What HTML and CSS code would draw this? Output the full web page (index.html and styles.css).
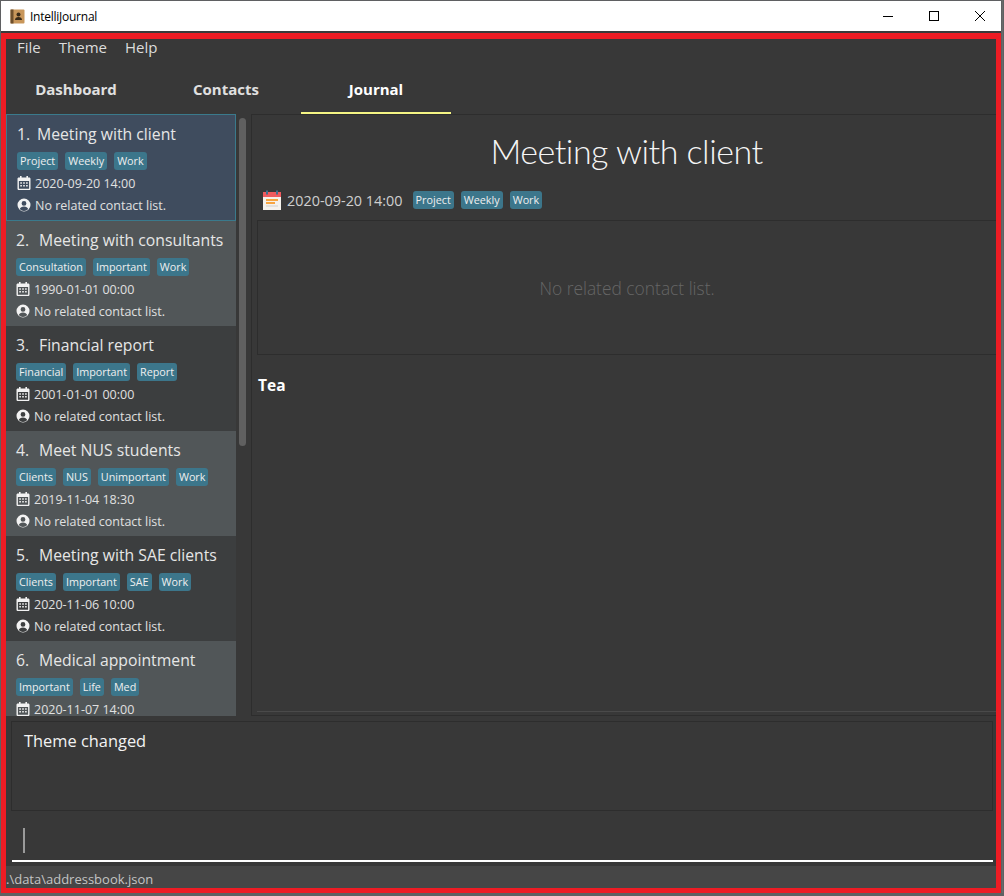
FILE: index.html
```html
<!DOCTYPE html>
<html lang="en">
<head>
  <meta charset="UTF-8" />
  <title>IntelliJournal</title>
  <link rel="stylesheet" href="styles.css">
</head>
<body>

  <svg class="defs" width="0" height="0">
    <symbol id="cal" viewBox="0 0 14 14">
      <path fill="#f2f2f2" d="M3 0h1.600v1.500h4.800V0H11v1.500h1.200c.7 0 1.300.6 1.300 1.300v9.900c0 .7-.6 1.300-1.300 1.300H1.800c-.7 0-1.300-.6-1.300-1.300V2.800c0-.7.6-1.300 1.300-1.300H3zM1.900 5v7.400c0 .2.100.3.300.3h9.600c.2 0 .3-.1.3-.3V5z" fill-rule="evenodd"/>
      <path fill="#f2f2f2" d="M3.300 6.300h1.600v1.500H3.300zM6.200 6.300h1.600v1.500H6.200zM9.100 6.300h1.600v1.500H9.100zM3.300 9h1.600v1.500H3.300zM6.200 9h1.600v1.500H6.200zM9.100 9h1.600v1.500H9.100z"/>
    </symbol>
    <symbol id="user" viewBox="0 0 14 14">
      <path fill="#f2f2f2" fill-rule="evenodd" d="M7 .5a6.500 6.500 0 1 0 0 13 6.500 6.500 0 0 0 0-13zM7 3a2.400 2.400 0 1 1 0 4.800A2.400 2.400 0 0 1 7 3zM2.800 11c.6-1.700 2-2.600 4.200-2.600s3.600.9 4.200 2.600C10.100 12.200 8.700 12.900 7 12.900S3.900 12.200 2.800 11z"/>
    </symbol>
  </svg>

  <div class="window">
    <div class="titlebar">
      <svg class="app-icon" width="15" height="15" viewBox="0 0 15 15">
        <rect x="0.500" y="0.500" width="14" height="14" rx="1" fill="#c8965a"/>
        <rect x="0.500" y="0.500" width="3" height="14" fill="#6e4f2c"/>
        <circle cx="8.500" cy="5.500" r="2" fill="#3a2a18"/>
        <path d="M5 11c0-2 1.500-3 3.500-3s3.500 1 3.500 3z" fill="#3a2a18"/>
      </svg>
      <span class="app-name">IntelliJournal</span>
      <div class="controls">
        <svg width="46" height="30" viewBox="0 0 46 30"><path d="M18 15.500h10" stroke="#000" fill="none"/></svg>
        <svg width="46" height="30" viewBox="0 0 46 30"><rect x="18.500" y="10.500" width="9" height="9" stroke="#000" fill="none"/></svg>
        <svg width="46" height="30" viewBox="0 0 46 30"><path d="M18 10l10 10M28 10L18 20" stroke="#000" fill="none"/></svg>
      </div>
    </div>

    <div class="app">
      <nav class="menu">
        <span>File</span>
        <span>Theme</span>
        <span>Help</span>
      </nav>

      <div class="tabs">
        <div class="tab">Dashboard</div>
        <div class="tab">Contacts</div>
        <div class="tab active">Journal</div>
      </div>

      <div class="main">
        <div class="list-pane">
          <div class="list">
            <div class="card selected">
              <div class="card-title"><span class="num first">1.</span>Meeting with client</div>
              <div class="tags"><span class="tag">Project</span><span class="tag">Weekly</span><span class="tag">Work</span></div>
              <div class="meta"><svg class="ico"><use href="#cal"/></svg>2020-09-20 14:00</div>
              <div class="meta"><svg class="ico"><use href="#user"/></svg>No related contact list.</div>
            </div>
            <div class="card even">
              <div class="card-title"><span class="num">2.</span>Meeting with consultants</div>
              <div class="tags"><span class="tag">Consultation</span><span class="tag">Important</span><span class="tag">Work</span></div>
              <div class="meta"><svg class="ico"><use href="#cal"/></svg>1990-01-01 00:00</div>
              <div class="meta"><svg class="ico"><use href="#user"/></svg>No related contact list.</div>
            </div>
            <div class="card">
              <div class="card-title"><span class="num">3.</span>Financial report</div>
              <div class="tags"><span class="tag">Financial</span><span class="tag">Important</span><span class="tag">Report</span></div>
              <div class="meta"><svg class="ico"><use href="#cal"/></svg>2001-01-01 00:00</div>
              <div class="meta"><svg class="ico"><use href="#user"/></svg>No related contact list.</div>
            </div>
            <div class="card even">
              <div class="card-title"><span class="num">4.</span>Meet NUS students</div>
              <div class="tags"><span class="tag">Clients</span><span class="tag">NUS</span><span class="tag">Unimportant</span><span class="tag">Work</span></div>
              <div class="meta"><svg class="ico"><use href="#cal"/></svg>2019-11-04 18:30</div>
              <div class="meta"><svg class="ico"><use href="#user"/></svg>No related contact list.</div>
            </div>
            <div class="card">
              <div class="card-title"><span class="num">5.</span>Meeting with SAE clients</div>
              <div class="tags"><span class="tag">Clients</span><span class="tag">Important</span><span class="tag">SAE</span><span class="tag">Work</span></div>
              <div class="meta"><svg class="ico"><use href="#cal"/></svg>2020-11-06 10:00</div>
              <div class="meta"><svg class="ico"><use href="#user"/></svg>No related contact list.</div>
            </div>
            <div class="card even">
              <div class="card-title"><span class="num">6.</span>Medical appointment</div>
              <div class="tags"><span class="tag">Important</span><span class="tag">Life</span><span class="tag">Med</span></div>
              <div class="meta"><svg class="ico"><use href="#cal"/></svg>2020-11-07 14:00</div>
            </div>
          </div>
          <div class="scrollbar"><div class="thumb"></div></div>
        </div>

        <div class="detail">
          <h1 class="detail-title">Meeting with client</h1>
          <div class="detail-meta">
            <svg class="big-cal" width="20" height="20" viewBox="0 0 20 20">
              <rect x="1" y="2" width="18" height="18" fill="#f5f2ec"/>
              <rect x="1" y="2" width="18" height="5" fill="#ef5b5f"/>
              <rect x="4" y="0.500" width="2" height="4" fill="#3f6f8f"/>
              <rect x="14" y="0.500" width="2" height="4" fill="#3f6f8f"/>
              <rect x="4" y="9" width="12" height="2" fill="#f7a540"/>
              <rect x="4" y="12" width="9" height="2" fill="#f7a540"/>
              <rect x="4" y="15" width="12" height="2" fill="#e4e1db"/>
            </svg>
            <span class="detail-date">2020-09-20 14:00</span>
            <div class="tags detail-tags"><span class="tag">Project</span><span class="tag">Weekly</span><span class="tag">Work</span></div>
          </div>
          <div class="contact-box">No related contact list.</div>
          <div class="note">Tea</div>
          <div class="detail-rule"></div>
        </div>
      </div>

      <div class="result">Theme changed</div>

      <div class="command">
        <div class="caret"></div>
      </div>

      <div class="status">.\data\addressbook.json</div>
    </div>
  </div>

</body>
</html>
```

FILE: styles.css
```css
html,
body {
  margin: 0;
  height: 896px;
  overflow: hidden;
}

body {
  font-family: "Open Sans", "Noto Sans", sans-serif;
  background-color: #5f6062;
  color: #e6e6e6;
}

.defs {
  display: block;
  height: 0;
}

.window {
  display: flex;
  flex-direction: column;
  height: 893px;
  width: 1003px;
  padding: 1px 1px 0 1px;
  box-sizing: border-box;
  background-color: #3a3a3a;
  background-clip: content-box;
  border-right: 1px solid #6a6a6a;
}

.titlebar {
  display: flex;
  align-items: center;
  height: 30px;
  flex: none;
  background-color: #fff;
  color: #000;
  font-size: 12px;
}

.app-icon {
  margin-left: 9px;
  margin-right: 5px;
}

.app-name {
  letter-spacing: -0.25px;
}

.controls {
  display: flex;
  margin-left: auto;
  margin-right: -2px;
}

.app {
  display: flex;
  flex-direction: column;
  flex: 1;
  min-height: 0;
  margin-top: 2px;
  width: 1000px;
  border: 5px solid #ed1c24;
  border-top-width: 6px;
  box-sizing: border-box;
  background-color: #383838;
}

.menu {
  display: flex;
  align-items: center;
  gap: 18px;
  height: 15px;
  flex: none;
  padding: 0 0 0 11px;
  font-size: 15px;
  color: #dcdcdc;
}

.tabs {
  display: flex;
  align-items: flex-end;
  height: 60px;
  flex: none;
}

.tab {
  display: flex;
  align-items: center;
  justify-content: center;
  width: 150px;
  height: 48px;
  box-sizing: border-box;
  border-bottom: 2px solid transparent;
  font-size: 15px;
  font-weight: 700;
  color: #e0e0e0;
}

.tab:first-child {
  width: 145px;
  padding-right: 5px;
}

.tab.active {
  color: #fff;
  border-bottom-color: #f5f584;
}

.main {
  display: flex;
  flex: none;
  height: 602px;
  overflow: hidden;
}

.list-pane {
  display: flex;
  width: 245px;
  flex: none;
  height: 602px;
}

.list {
  width: 230px;
  flex: none;
  height: 602px;
  overflow: hidden;
}

.card {
  height: 105px;
  box-sizing: border-box;
  padding: 8px 0 0 10px;
  background-color: #3c3e3f;
}

.card.even {
  background-color: #515658;
}

.card.selected {
  height: 107px;
  background-color: #3f4c5e;
  border: 1px solid #3a7a8c;
}

.card-title {
  display: flex;
  font-size: 15.75px;
  line-height: 22px;
  color: #e6e6e6;
}

.num {
  width: 23px;
  flex: none;
}

.num.first {
  width: 20px;
}

.tags {
  display: flex;
  gap: 7px;
  margin-top: 7px;
  margin-bottom: 2px;
}

.tag {
  height: 18px;
  padding: 0 3px;
  border-radius: 3px;
  background-color: #3c768b;
  color: #efefef;
  font-size: 10.8px;
  line-height: 18px;
}

.meta {
  display: flex;
  align-items: center;
  gap: 4px;
  height: 22px;
  font-size: 12.5px;
  color: #e0e0e0;
}

.ico {
  width: 14px;
  height: 14px;
  flex: none;
}

.scrollbar {
  flex: 1;
  padding: 4px 5px 0 3px;
}

.thumb {
  height: 328px;
  border-radius: 4px;
  background-color: #606060;
}

.detail {
  display: flex;
  flex-direction: column;
  flex: 1;
  min-width: 0;
  border-top: 1px solid #2d2d2d;
  border-left: 1px solid #2d2d2d;
  border-bottom: 1px solid #2d2d2d;
  padding-left: 5px;
}

.detail-title {
  margin: 13px 0 0 0;
  font-family: "Lato", "Open Sans", sans-serif;
  font-size: 34px;
  letter-spacing: -0.5px;
  line-height: 46px;
  font-weight: 300;
  text-align: center;
  color: #f5f5f5;
}

.detail-meta {
  display: flex;
  align-items: center;
  height: 22px;
  margin-top: 15px;
}

.big-cal {
  margin-left: 5px;
  margin-right: 5px;
}

.detail-date {
  font-size: 14.4px;
  color: #cfcfcf;
}

.detail-tags {
  margin: 0 0 0 10px;
}

.contact-box {
  display: flex;
  align-items: center;
  justify-content: center;
  height: 135px;
  flex: none;
  margin-top: 9px;
  box-sizing: border-box;
  border: 1px solid #2d2d2d;
  border-right: none;
  font-size: 17.4px;
  font-weight: 300;
  color: #666;
}

.note {
  margin: 19px 0 0 1px;
  font-size: 15.5px;
  line-height: 22px;
  font-weight: 700;
  color: #fff;
}

.detail-rule {
  margin-top: auto;
  margin-bottom: 3px;
  height: 1px;
  background-color: #4a4a4a;
}

.result {
  height: 90px;
  flex: none;
  margin: 5px 3px 0 5px;
  padding: 8px 12px;
  box-sizing: border-box;
  border: 1px solid #2d2d2d;
  font-size: 16.4px;
  line-height: 22px;
  color: #f2f2f2;
}

.command {
  height: 51px;
  flex: none;
  margin: 0 3px 0 6px;
  padding: 17px 0 0 11px;
  box-sizing: border-box;
  border-bottom: 2px solid #fff;
}

.caret {
  width: 2px;
  height: 25px;
  background-color: #9a9a9a;
}

.status {
  margin-top: 4px;
  height: 22px;
  flex: none;
  box-sizing: border-box;
  padding-top: 4px;
  background-color: #464646;
  font-size: 13px;
  line-height: 18px;
  color: #c4c4c4;
  white-space: nowrap;
}
```
